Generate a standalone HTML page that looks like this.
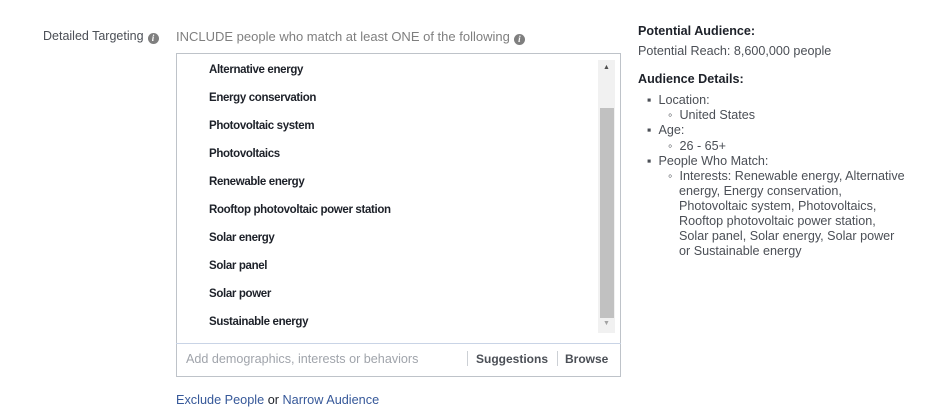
<!DOCTYPE html><html><head><style>
body{margin:0;width:927px;height:418px;background:#fff;font-family:"Liberation Sans",Arial,sans-serif;position:relative;overflow:hidden;color:#1d2129}
.a{position:absolute;white-space:nowrap}
.i{display:inline-block;width:11px;height:11px;border-radius:50%;background:#7f7f7f;color:#fff;font-size:9px;line-height:11px;text-align:center;font-style:italic;font-weight:bold;font-family:"Liberation Serif",serif;vertical-align:-1px;margin-left:4px}
.it{position:absolute;left:209px;font-size:11.5px;font-weight:bold;letter-spacing:-0.35px;color:#1d2129;white-space:nowrap}
.r{position:absolute;font-size:12.6px;color:#4b4f56;white-space:nowrap}
</style></head><body>
<div class="a" style="left:43px;top:29px;font-size:12.5px;color:#4b4f56">Detailed Targeting<span class="i">i</span></div>
<div class="a" style="left:176px;top:29px;font-size:13px;color:#7f7f7f">INCLUDE people who match at least ONE of the following<span class="i">i</span></div>
<div style="position:absolute;left:176px;top:53px;width:445px;height:324px;border:1px solid #bec3c9;box-sizing:border-box"></div>
<div style="position:absolute;left:176px;top:343px;width:445px;height:1px;background:#c9d4e6"></div>
<div style="position:absolute;left:598px;top:60px;width:17px;height:273px;background:#f1f1f1"></div>
<div style="position:absolute;left:600px;top:108px;width:14px;height:210px;background:#c1c1c1"></div>
<div class="a" style="left:603px;top:64px;font-size:7px;color:#505050">▲</div>
<div class="a" style="left:603px;top:320px;font-size:7px;color:#a3a3a3">▼</div>
<div class="it" style="top:64px">Alternative energy</div>
<div class="it" style="top:92px">Energy conservation</div>
<div class="it" style="top:120px">Photovoltaic system</div>
<div class="it" style="top:148px">Photovoltaics</div>
<div class="it" style="top:176px">Renewable energy</div>
<div class="it" style="top:204px">Rooftop photovoltaic power station</div>
<div class="it" style="top:232px">Solar energy</div>
<div class="it" style="top:260px">Solar panel</div>
<div class="it" style="top:288px">Solar power</div>
<div class="it" style="top:316px">Sustainable energy</div>
<div class="a" style="left:186px;top:352px;font-size:12.6px;color:#a0a4ab">Add demographics, interests or behaviors</div>
<div style="position:absolute;left:467px;top:351px;width:1px;height:15px;background:#ccd0d5"></div>
<div class="a" style="left:476px;top:352px;font-size:12px;font-weight:bold;color:#4b4f56">Suggestions</div>
<div style="position:absolute;left:557px;top:351px;width:1px;height:15px;background:#ccd0d5"></div>
<div class="a" style="left:565px;top:352px;font-size:12px;font-weight:bold;color:#4b4f56">Browse</div>
<div class="a" style="left:176px;top:393px;font-size:12.7px;color:#1d2129"><span style="color:#365899">Exclude People</span> or <span style="color:#365899">Narrow Audience</span></div>
<div class="r" style="left:638px;top:24px;font-weight:bold;color:#1d2129">Potential Audience:</div>
<div class="r" style="left:638px;top:44px">Potential Reach: 8,600,000 people</div>
<div class="r" style="left:638px;top:72px;font-weight:bold;color:#1d2129">Audience Details:</div>
<div class="r" style="left:647px;top:93px">▪&nbsp;&nbsp;Location:</div>
<div class="r" style="left:668px;top:108px">◦&nbsp;&nbsp;United States</div>
<div class="r" style="left:647px;top:123px">▪&nbsp;&nbsp;Age:</div>
<div class="r" style="left:668px;top:139px">◦&nbsp;&nbsp;26 - 65+</div>
<div class="r" style="left:647px;top:154px">▪&nbsp;&nbsp;People Who Match:</div>
<div class="r" style="left:668px;top:169px">◦&nbsp;&nbsp;Interests: Renewable energy, Alternative</div>
<div class="r" style="left:679px;top:184px;line-height:15px">energy, Energy conservation,<br>Photovoltaic system, Photovoltaics,<br>Rooftop photovoltaic power station,<br>Solar panel, Solar energy, Solar power<br>or Sustainable energy</div>
</body></html>
